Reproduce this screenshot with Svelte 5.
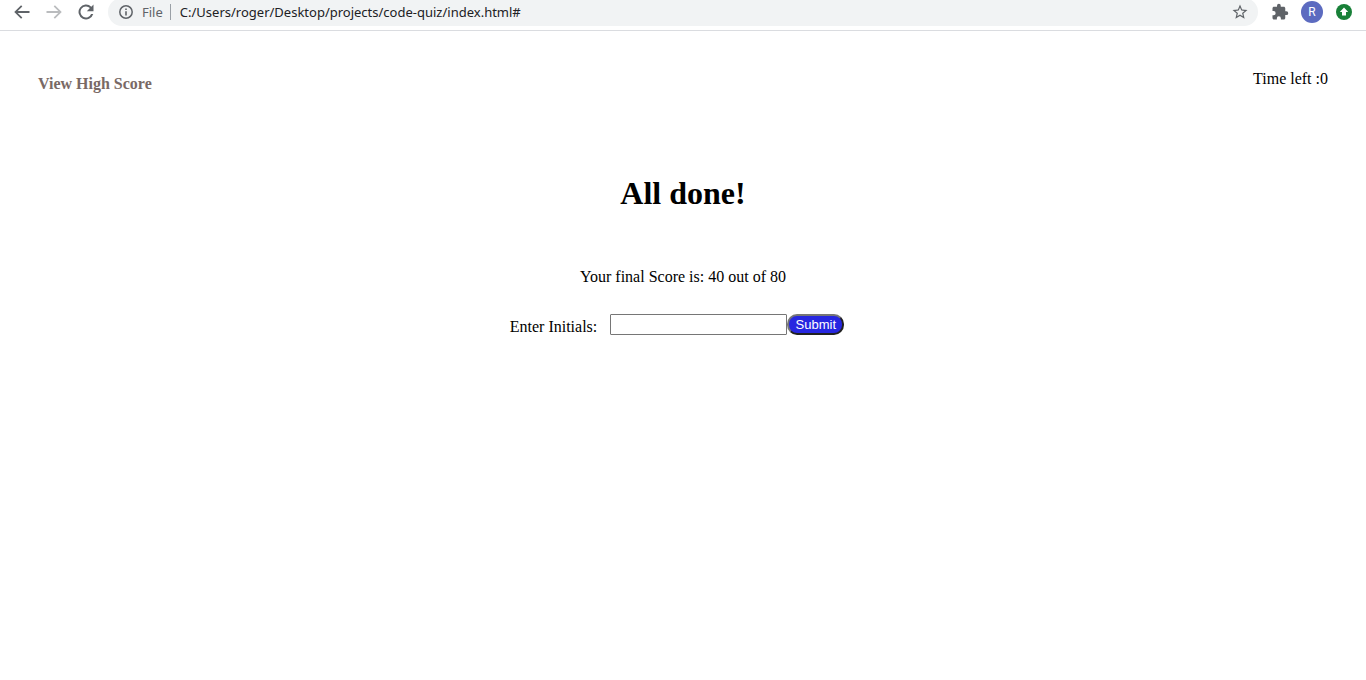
<script>
  let initials = $state('');
  const score = 40;
  const total = 80;
  const timeLeft = 0;
  const address = 'C:/Users/roger/Desktop/projects/code-quiz/index.html#';
</script>

<div class="window">
  <header class="toolbar">
    <nav class="tools" aria-label="Browser navigation">
      <button type="button" class="tool" aria-label="Back">
        <svg class="icon" viewBox="0 0 24 24"><path d="M21 10.800H6.900l5.500-5.400L10.900 3.800 2.700 12l8.200 8.200 1.500-1.600-5.500-5.400H21z" /></svg>
      </button>
      <button type="button" class="tool faded" aria-label="Forward">
        <svg class="icon" viewBox="0 0 24 24"><path d="M3 10.800h14.100l-5.500-5.400 1.500-1.600 8.200 8.200-8.200 8.200-1.500-1.600 5.500-5.400H3z" /></svg>
      </button>
      <button type="button" class="tool" aria-label="Reload">
        <svg class="icon" viewBox="0 0 24 24"><path d="M18.400 5.600A9 9 0 1 0 20.700 14.500H18.100A6.600 6.600 0 1 1 16.700 7.300L13 11h8V3z" /></svg>
      </button>
    </nav>

    <div class="address">
      <svg class="info" viewBox="0 0 16 16">
        <circle cx="8" cy="8" r="6.200" fill="none" stroke="#5f6368" stroke-width="1.500" />
        <path d="M7.200 4.500h1.600v1.600H7.200zM7.200 7.200h1.600v4.300H7.200z" />
      </svg>
      <span class="scheme">File</span>
      <span class="url">{address}</span>
      <button type="button" class="star" aria-label="Bookmark this page">
        <svg viewBox="0 0 24 24"><path d="M22 9.240l-7.190-.62L12 2 9.190 8.630 2 9.240l5.460 4.730L5.820 21 12 17.270 18.180 21l-1.630-7.030L22 9.240zM12 15.400l-3.760 2.270 1-4.280-3.320-2.880 4.380-.38L12 6.100l1.710 4.040 4.380.38-3.320 2.880 1 4.280L12 15.400z" /></svg>
      </button>
    </div>

    <div class="tools">
      <button type="button" class="tool" aria-label="Extensions">
        <svg class="puzzle" viewBox="0 0 24 24"><path d="M20.500 11H19V7c0-1.100-.9-2-2-2h-4V3.500a2.500 2.500 0 0 0-5 0V5H4c-1.100 0-2 .9-2 2v3.800h1.500a2.700 2.700 0 0 1 0 5.400H2V20c0 1.100.9 2 2 2h3.800v-1.500a2.700 2.700 0 0 1 5.400 0V22H17c1.100 0 2-.9 2-2v-4h1.500a2.500 2.500 0 0 0 0-5z" /></svg>
      </button>
      <button type="button" class="tool" aria-label="Profile"><span class="avatar">R</span></button>
      <button type="button" class="tool" aria-label="Update">
        <svg class="update" viewBox="0 0 16 16">
          <circle cx="8" cy="8" r="8" fill="#188038" />
          <path d="M8 3.500L3.800 8H6v3.500h4V8h2.200z" fill="#fff" />
        </svg>
      </button>
    </div>
  </header>

  <main>
    <div class="status">
      <a class="scores" href="#scores">View High Score</a>
      <span class="time">Time left :{timeLeft}</span>
    </div>
    <h1>All done!</h1>
    <p>Your final Score is: {score} out of {total}</p>
    <form onsubmit={(event) => event.preventDefault()}>
      <label for="initials">Enter Initials:</label>
      <input id="initials" type="text" bind:value={initials} />
      <button type="submit" class="submit">Submit</button>
    </form>
  </main>
</div>

<style>
  :global(body) {
    margin: 0;
    background: #fff;
  }
  .window {
    overflow: hidden;
    font: 16px/18px "Liberation Serif", "Times New Roman", serif;
    color: #000;
  }
  .toolbar {
    display: flex;
    align-items: center;
    gap: 6px;
    margin-top: -2px;
    padding: 0 6px 4px;
    border-bottom: 1px solid #dadce0;
    font-family: "Noto Sans", "Segoe UI", sans-serif;
  }
  .tools {
    display: flex;
  }
  .tool,
  .star {
    display: flex;
    align-items: center;
    justify-content: center;
    width: 32px;
    height: 28px;
    padding: 0;
    border: 0;
    background: none;
  }
  svg {
    fill: #5f6368;
  }
  .icon {
    width: 20px;
    height: 20px;
  }
  .faded .icon {
    fill: #babcbe;
  }
  .address {
    display: flex;
    flex: 1;
    align-items: center;
    min-width: 0;
    height: 28px;
    padding: 0 2px 0 10px;
    box-sizing: border-box;
    border-radius: 14px;
    background: #f1f3f4;
    font-size: 13px;
  }
  .info {
    width: 16px;
    height: 16px;
    margin-right: 8px;
  }
  .scheme {
    padding-right: 7px;
    border-right: 1px solid #9aa0a6;
    line-height: 16px;
    color: #5f6368;
  }
  .url {
    flex: 1;
    margin-left: 9px;
    color: #202124;
    white-space: nowrap;
  }
  .star svg,
  .puzzle {
    width: 18px;
    height: 18px;
  }
  .avatar {
    width: 22px;
    border-radius: 50%;
    background: #5c6bc0;
    color: #fff;
    font: 12px/22px Roboto, sans-serif;
    text-align: center;
  }
  .update {
    width: 16px;
    height: 16px;
  }
  main {
    padding: 39px 38px;
    text-align: center;
  }
  .status {
    display: flex;
    justify-content: space-between;
  }
  .scores {
    margin-top: 5px;
    color: #796965;
    font-weight: bold;
    text-decoration: none;
  }
  h1 {
    margin: 82px 0 0;
    font-size: 32px;
    line-height: 36px;
  }
  p {
    margin: 57px 0 0;
  }
  form {
    display: flex;
    justify-content: center;
    align-items: flex-start;
    margin-top: 28px;
    padding-right: 12px;
  }
  label {
    margin: 4px 13px 0 0;
  }
  input {
    width: 177px;
    height: 21px;
    box-sizing: border-box;
    border: 1px solid #767676;
    border-radius: 1px;
    background: #fff;
  }
  .submit {
    min-width: 57px;
    height: 21px;
    padding: 0 5px;
    box-sizing: border-box;
    border: 2px solid;
    border-color: #767676 #212121 #212121 #767676;
    border-radius: 10px;
    background: #2727e0;
    color: #fff;
    font: 13px/16px "Liberation Sans", Arial, sans-serif;
  }
</style>
